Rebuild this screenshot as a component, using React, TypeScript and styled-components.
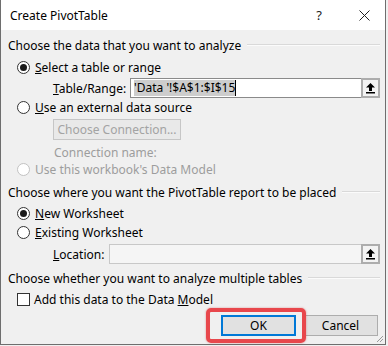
import styled, { createGlobalStyle } from 'styled-components';

const GlobalStyle = createGlobalStyle`
  html, body {
    margin: 0;
    padding: 0;
    background: #f0f0f0;
  }
  body {
    font-family: 'Noto Sans', 'Open Sans', sans-serif;
    font-size: 12px;
    color: #000;
  }
`;

const Dialog = styled.div`
  position: relative;
  box-sizing: border-box;
  width: 386px;
  height: 345px;
  background: #f0f0f0;
  border-left: 1px solid #6e6e6e;
  border-right: 1px solid #6e6e6e;
  border-bottom: 1px solid #6e6e6e;
`;

const TitleBar = styled.div`
  display: flex;
  align-items: center;
  height: 30px;
  padding-left: 9px;
  background: #fff;
`;

const TitleText = styled.div`
  flex: 1;
  font-size: 12px;
`;

const TitleControls = styled.div`
  display: flex;
  align-items: center;
  gap: 37px;
  padding-right: 15px;
`;

const HelpGlyph = styled.span`
  font-size: 13px;
  color: #222;
`;

const Body = styled.div`
  display: flex;
  flex-direction: column;
  padding: 0 5px 0 7px;
`;

const SectionHeader = styled.div<{ $top: number }>`
  display: flex;
  align-items: center;
  height: 16px;
  margin-top: ${({ $top }) => $top}px;
  white-space: nowrap;
  &::after {
    content: '';
    flex: 1;
    margin-left: 6px;
    border-top: 1px solid #d9d9d9;
    border-bottom: 1px solid #fbfbfb;
  }
`;

const Row = styled.div<{ $top: number; $indent: number; $height?: number }>`
  display: flex;
  align-items: center;
  height: ${({ $height }) => $height ?? 16}px;
  margin-top: ${({ $top }) => $top}px;
  padding-left: ${({ $indent }) => $indent}px;
  white-space: nowrap;
`;

const Radio = styled.span<{ $checked?: boolean; $disabled?: boolean }>`
  position: relative;
  box-sizing: border-box;
  width: 13px;
  height: 13px;
  margin-right: 5px;
  border-radius: 50%;
  border: 1px solid ${({ $disabled }) => ($disabled ? '#c2c2c2' : '#333')};
  background: #fff;
  &::after {
    content: '';
    display: ${({ $checked }) => ($checked ? 'block' : 'none')};
    position: absolute;
    left: 2px;
    top: 2px;
    width: 7px;
    height: 7px;
    border-radius: 50%;
    background: #1a1a1a;
  }
`;

const Checkbox = styled.span`
  box-sizing: border-box;
  width: 13px;
  height: 13px;
  margin-right: 4px;
  border: 1px solid #333;
  background: #fff;
`;

const Label = styled.span<{ $disabled?: boolean; $width?: number }>`
  color: ${({ $disabled }) => ($disabled ? '#9d9d9d' : '#000')};
  width: ${({ $width }) => ($width ? `${$width}px` : 'auto')};
  flex-shrink: 0;
`;

const Field = styled.div<{ $disabled?: boolean }>`
  display: flex;
  align-items: stretch;
  box-sizing: border-box;
  flex: 1;
  height: 20px;
  border: 1px solid ${({ $disabled }) => ($disabled ? '#c8c8c8' : '#8a8a8a')};
  background: ${({ $disabled }) => ($disabled ? '#f5f5f5' : '#fff')};
`;

const FieldValue = styled.div`
  flex: 1;
  display: flex;
  align-items: center;
  padding-left: 3px;
`;

const Selection = styled.span`
  background: #cdcdcd;
  line-height: 16px;
  border-right: 1px solid #000;
`;

const Picker = styled.div`
  display: flex;
  align-items: center;
  justify-content: center;
  box-sizing: border-box;
  width: 19px;
  margin: -1px -1px -1px 0;
  border: 2px solid #adadad;
  background: #f3f3f3;
`;

const DialogButton = styled.div<{ $primary?: boolean; $disabled?: boolean; $width: number }>`
  display: flex;
  align-items: center;
  justify-content: center;
  box-sizing: border-box;
  width: ${({ $width }) => $width}px;
  height: 21px;
  background: ${({ $disabled }) => ($disabled ? '#e9e9e9' : '#e1e1e1')};
  border: ${({ $primary, $disabled }) =>
    $primary ? '2px solid #0078d7' : `1px solid ${$disabled ? '#c6c6c6' : '#adadad'}`};
  color: ${({ $disabled }) => ($disabled ? '#a3a3a3' : '#000')};
`;

const ButtonBar = styled.div`
  display: flex;
  justify-content: flex-end;
  gap: 7px;
  margin-top: 8px;
  padding-right: 2px;
`;

const HighlightWrap = styled.div`
  position: relative;
`;

const Highlight = styled.div`
  position: absolute;
  left: -15px;
  right: -10px;
  top: -7px;
  bottom: -7px;
  border: 4px solid #e8474c;
  border-radius: 5px;
  box-shadow: 0 0 2px rgba(200, 40, 40, 0.5);
  pointer-events: none;
`;

const Grip = styled.svg`
  position: absolute;
  right: 1px;
  bottom: 1px;
`;

const UploadIcon = () => (
  <svg width="11" height="12" viewBox="0 0 11 12">
    <path d="M5.5 1 L10 5.5 L7 5.5 L7 9 L4 9 L4 5.5 L1 5.5 Z" fill="#000" />
    <rect x="1" y="10" width="9" height="1.5" fill="#000" />
  </svg>
);

const CloseIcon = () => (
  <svg width="11" height="11" viewBox="0 0 11 11">
    <path d="M0.5 0.5 L10.5 10.5 M10.5 0.5 L0.5 10.5" stroke="#222" strokeWidth="1" />
  </svg>
);

export default function App() {
  return (
    <>
      <GlobalStyle />
      <Dialog>
        <TitleBar>
          <TitleText>Create PivotTable</TitleText>
          <TitleControls>
            <HelpGlyph>?</HelpGlyph>
            <CloseIcon />
          </TitleControls>
        </TitleBar>
        <Body>
          <SectionHeader $top={7}>Choose the data that you want to analyze</SectionHeader>
          <Row $top={6} $indent={9}>
            <Radio $checked />
            <Label>
              <u>S</u>elect a table or range
            </Label>
          </Row>
          <Row $top={3} $indent={45} $height={20}>
            <Label $width={77}>
              <u>T</u>able/Range:
            </Label>
            <Field>
              <FieldValue>
                <Selection>'Data '!$A$1:$I$15</Selection>
              </FieldValue>
              <Picker>
                <UploadIcon />
              </Picker>
            </Field>
          </Row>
          <Row $top={1} $indent={9}>
            <Radio />
            <Label>
              <u>U</u>se an external data source
            </Label>
          </Row>
          <Row $top={4} $indent={45} $height={21}>
            <DialogButton $disabled $width={128}>
              Choose Connection...
            </DialogButton>
          </Row>
          <Row $top={4} $indent={46}>
            <Label $disabled>Connection name:</Label>
          </Row>
          <Row $top={1} $indent={9}>
            <Radio $disabled />
            <Label $disabled>Use this workbook's Data Model</Label>
          </Row>
          <SectionHeader $top={7}>
            Choose where you want the PivotTable report to be placed
          </SectionHeader>
          <Row $top={5} $indent={9}>
            <Radio $checked />
            <Label>
              <u>N</u>ew Worksheet
            </Label>
          </Row>
          <Row $top={3} $indent={9}>
            <Radio />
            <Label>
              <u>E</u>xisting Worksheet
            </Label>
          </Row>
          <Row $top={4} $indent={45} $height={20}>
            <Label $width={56}>
              <u>L</u>ocation:
            </Label>
            <Field $disabled>
              <FieldValue />
              <Picker>
                <UploadIcon />
              </Picker>
            </Field>
          </Row>
          <SectionHeader $top={6}>Choose whether you want to analyze multiple tables</SectionHeader>
          <Row $top={5} $indent={9}>
            <Checkbox />
            <Label>
              Add this data to the Data <u>M</u>odel
            </Label>
          </Row>
          <ButtonBar>
            <HighlightWrap>
              <DialogButton $primary $width={75}>
                OK
              </DialogButton>
              <Highlight />
            </HighlightWrap>
            <DialogButton $width={75}>Cancel</DialogButton>
          </ButtonBar>
        </Body>
        <Grip width="8" height="8" viewBox="0 0 8 8">
          <path d="M7 1 L1 7 M7 4 L4 7" stroke="#9a9a9a" strokeWidth="1" />
        </Grip>
      </Dialog>
    </>
  );
}
